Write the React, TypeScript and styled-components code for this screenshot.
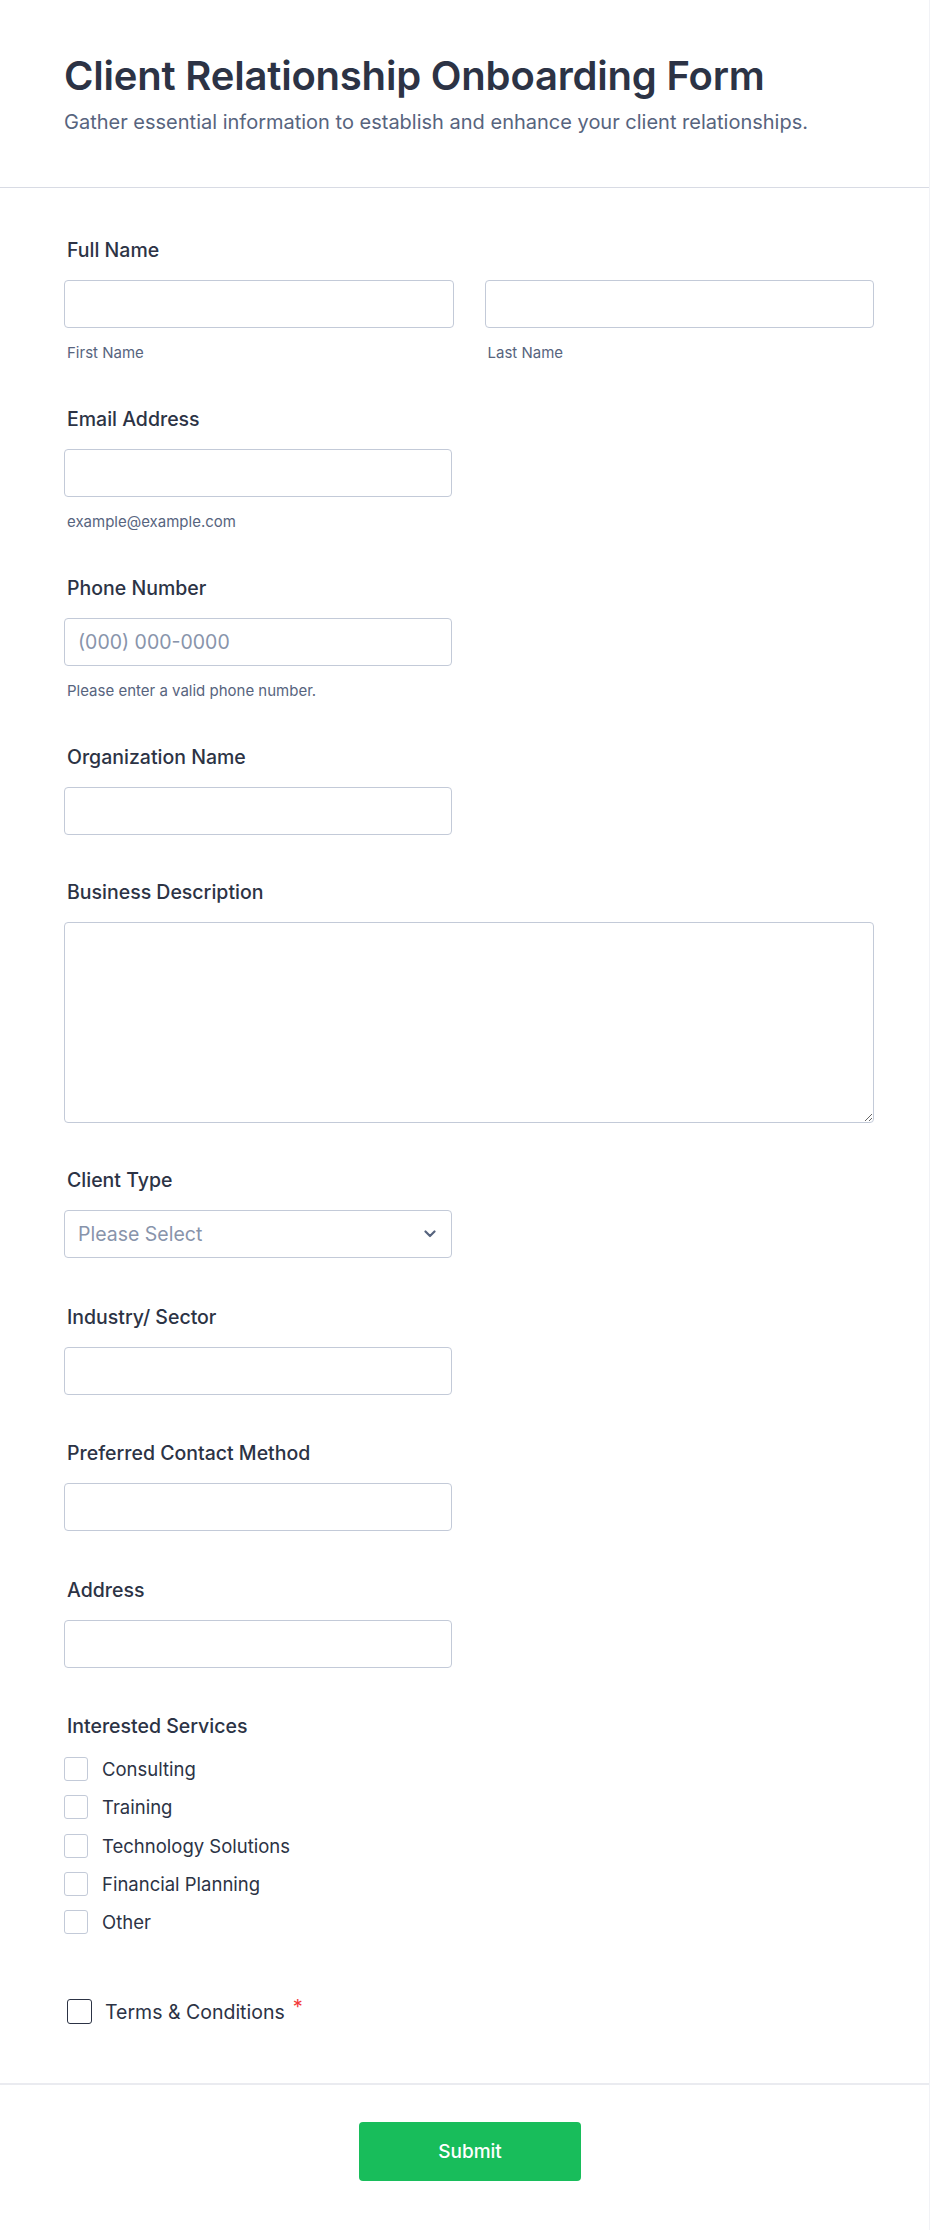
import React from "react";
import styled, { createGlobalStyle } from "styled-components";

const GlobalStyle = createGlobalStyle`
  html, body {
    margin: 0;
    padding: 0;
    background: #ffffff;
  }
  body {
    font-family: Inter, "Noto Sans", "Liberation Sans", sans-serif;
    color: #2c3345;
  }
  * {
    box-sizing: border-box;
  }
`;

const Page = styled.div`
  width: 930px;
  min-height: 2230px;
  background: #fff;
  border-right: 1px solid #f1f2f6;
`;

const Header = styled.header`
  height: 188px;
  padding: 52px 64px 0 64px;
  border-bottom: 1px solid #d8dbe4;
  h1 {
    margin: 0;
    font-size: 40px;
    line-height: 48px;
    font-weight: 600;
    color: #2c3345;
    letter-spacing: -0.2px;
  }
  p {
    margin: 8px 0 0 0;
    font-size: 20px;
    line-height: 28px;
    color: #57647e;
  }
`;

const Body = styled.div`
  padding: 50px 55px 0 64px;
  display: flex;
  flex-direction: column;
  gap: 45px;
`;

const Field = styled.div<{ $shift?: boolean }>`
  display: flex;
  flex-direction: column;
  margin-top: ${(p) => (p.$shift ? "1.5px" : "0")};
`;

const Label = styled.label`
  display: block;
  padding-left: 3px;
  font-size: 19.5px;
  line-height: 24px;
  font-weight: 500;
  color: #2c3345;
  margin-bottom: 18px;
`;

const Row = styled.div`
  display: grid;
  grid-template-columns: 1fr 1fr;
  gap: 31px;
`;

const Col = styled.div`
  display: flex;
  flex-direction: column;
`;

const Input = styled.input<{ $half?: boolean }>`
  width: ${(p) => (p.$half ? "388px" : "100%")};
  height: 48px;
  border: 1px solid #c3cad8;
  border-radius: 4px;
  padding: 0 13px;
  font-family: inherit;
  font-size: 19.5px;
  color: #2c3345;
  background: #fff;
  outline: none;
  &::placeholder {
    color: #8894ab;
  }
`;

const TextArea = styled.textarea`
  width: 100%;
  height: 201px;
  border: 1px solid #c3cad8;
  border-radius: 4px;
  padding: 10px 13px;
  font-family: inherit;
  font-size: 18px;
  resize: vertical;
  outline: none;
  display: block;
`;

const Sub = styled.span`
  display: block;
  padding-left: 3px;
  margin-top: 16px;
  font-size: 15px;
  line-height: 18px;
  color: #57647e;
`;

const SelectBox = styled.div`
  width: 388px;
  height: 48px;
  border: 1px solid #c3cad8;
  border-radius: 4px;
  padding: 0 13px;
  display: flex;
  align-items: center;
  justify-content: space-between;
  font-size: 19.5px;
  color: #8894ab;
  svg {
    margin-right: 2px;
  }
`;

const Checks = styled.div`
  display: flex;
  flex-direction: column;
  gap: 14.3px;
  margin-top: 1px;
`;

const CheckRow = styled.label`
  display: flex;
  align-items: center;
  gap: 14px;
  height: 24px;
  font-size: 18.5px;
  color: #2c3345;
`;

const Box = styled.span<{ $dark?: boolean }>`
  width: ${(p) => (p.$dark ? "25px" : "24px")};
  height: ${(p) => (p.$dark ? "25px" : "24px")};
  flex: none;
  border: ${(p) => (p.$dark ? "1.5px solid #2c3345" : "1px solid #c3cad8")};
  border-radius: 3px;
  background: #fff;
`;

const Terms = styled.label`
  display: flex;
  align-items: center;
  gap: 13px;
  height: 25px;
  padding-left: 3px;
  margin-top: 65px;
  font-size: 19.5px;
  color: #2c3345;
`;

const Star = styled.span`
  color: #f23a3c;
  font-size: 20px;
  align-self: flex-start;
  margin-left: -5px;
  margin-top: -4px;
`;

const Footer = styled.div`
  margin-top: 59px;
  border-top: 2px solid #eaebf0;
  padding: 37px 55px 50px 64px;
  display: flex;
  justify-content: center;
`;

const Submit = styled.button`
  width: 222px;
  height: 59px;
  border: none;
  border-radius: 4px;
  background: #18bd5b;
  color: #fff;
  font-family: inherit;
  font-size: 19px;
  font-weight: 500;
  margin-left: 2px;
`;

const services = [
  "Consulting",
  "Training",
  "Technology Solutions",
  "Financial Planning",
  "Other",
];

const Chevron = () => (
  <svg width="12" height="8" viewBox="0 0 12 8" fill="none">
    <path
      d="M1.5 1.5L6 6L10.5 1.5"
      stroke="#57647e"
      strokeWidth="2.2"
      strokeLinecap="round"
      strokeLinejoin="round"
    />
  </svg>
);

export default function App() {
  return (
    <Page>
      <GlobalStyle />
      <Header>
        <h1>Client Relationship Onboarding Form</h1>
        <p>
          Gather essential information to establish and enhance your client
          relationships.
        </p>
      </Header>
      <Body>
        <Field>
          <Label>Full Name</Label>
          <Row>
            <Col>
              <Input />
              <Sub>First Name</Sub>
            </Col>
            <Col>
              <Input />
              <Sub>Last Name</Sub>
            </Col>
          </Row>
        </Field>
        <Field>
          <Label>Email Address</Label>
          <Input $half />
          <Sub>example@example.com</Sub>
        </Field>
        <Field>
          <Label>Phone Number</Label>
          <Input $half placeholder="(000) 000-0000" />
          <Sub>Please enter a valid phone number.</Sub>
        </Field>
        <Field>
          <Label>Organization Name</Label>
          <Input $half />
        </Field>
        <Field>
          <Label>Business Description</Label>
          <TextArea />
        </Field>
        <Field>
          <Label>Client Type</Label>
          <SelectBox>
            <span>Please Select</span>
            <Chevron />
          </SelectBox>
        </Field>
        <Field $shift>
          <Label>Industry/ Sector</Label>
          <Input $half />
        </Field>
        <Field $shift>
          <Label>Preferred Contact Method</Label>
          <Input $half />
        </Field>
        <Field $shift>
          <Label>Address</Label>
          <Input $half />
        </Field>
        <Field $shift>
          <Label>Interested Services</Label>
          <Checks>
            {services.map((s) => (
              <CheckRow key={s}>
                <Box />
                {s}
              </CheckRow>
            ))}
          </Checks>
          <Terms>
            <Box $dark />
            Terms &amp; Conditions
            <Star>*</Star>
          </Terms>
        </Field>
      </Body>
      <Footer>
        <Submit>Submit</Submit>
      </Footer>
    </Page>
  );
}
